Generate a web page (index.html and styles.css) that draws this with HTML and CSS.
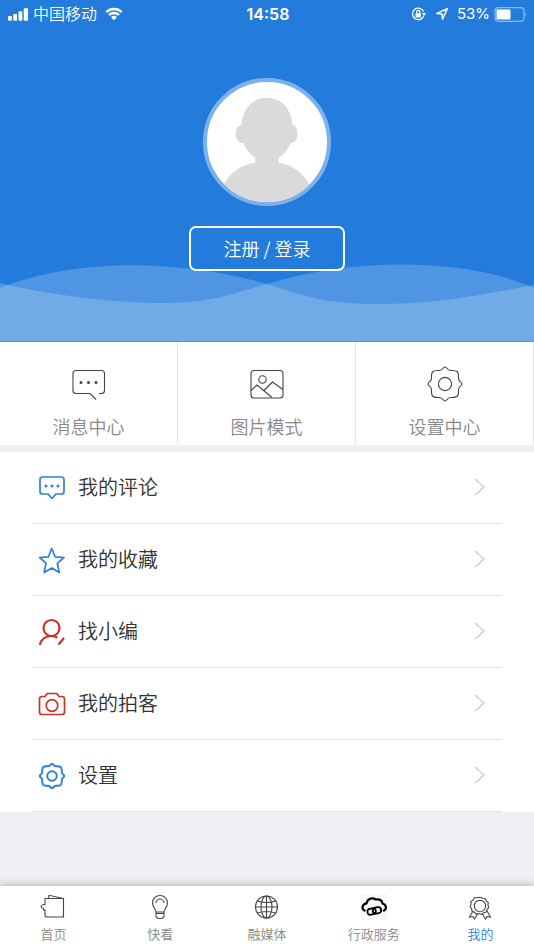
FILE: index.html
```html
<!DOCTYPE html>
<html lang="zh-CN">
<head>
<meta charset="utf-8">
<meta name="viewport" content="width=device-width, initial-scale=1">
<title>我的</title>
<link rel="stylesheet" href="styles.css">
</head>
<body>
<svg class="defs" aria-hidden="true">
  <symbol id="gear" viewBox="0 0 36 36">
    <g id="gear-edge">
      <path id="gear-quarter" d="M18 1C20 1 19.8 4.2 23.6 4.5C26.8 4.5 29 4.2 30.2 5.8C31.8 7 31.500 9.2 31.500 12.4C31.8 16.2 35 16 35 18"/>
      <use href="#gear-quarter" transform="rotate(90 18 18)"/>
      <use href="#gear-quarter" transform="rotate(180 18 18)"/>
      <use href="#gear-quarter" transform="rotate(270 18 18)"/>
    </g>
    <circle cx="18" cy="18" r="6.600"/>
  </symbol>
  <symbol id="chevron" viewBox="0 0 12 20"><path d="M1 2l9 8-9 8"/></symbol>
</svg>
<div class="app">
  <header class="hero">
    <div class="status">
      <div class="status-side">
        <svg class="signal" viewBox="0 0 22 14"><rect x="0" y="9" width="4" height="5" rx="1"/><rect x="5.500" y="7" width="4" height="7" rx="1"/><rect x="11" y="4" width="4" height="10" rx="1"/><rect x="16.500" y="1" width="4.500" height="13" rx="1"/></svg>
        <span class="carrier">中国移动</span>
        <svg class="wifi" viewBox="0 0 18 14"><path d="M1.300 5.200a11 11 0 0 1 15.400 0M4 8a7.200 7.200 0 0 1 10 0"/><path class="solid" d="M9 13.300L6 10.300a4.300 4.300 0 0 1 6 0z"/></svg>
      </div>
      <span class="time">14:58</span>
      <div class="status-side status-end">
        <svg class="lock" viewBox="0 0 16 14"><path d="M12.600 9.300A5.800 5.800 0 1 1 12.600 4.500"/><path class="solid" d="M10.800 6h4.400L13 9zM4.500 6.300h5.400v4.200H4.500z"/><path d="M5.600 6.500V5a1.600 1.600 0 0 1 3.200 0v1.500"/></svg>
        <svg class="arrow" viewBox="0 0 14 14"><path d="M12.300 1.700L1.800 6.400l5.200.6.500 5.300z"/></svg>
        <span class="percent">53%</span>
        <svg class="battery" viewBox="0 0 34 15"><rect class="shell" x="1" y=".7" width="29" height="13.600" rx="3.500"/><rect class="level" x="2.500" y="2.500" width="14" height="10" rx="1"/><path class="tip" d="M31.500 5.300q2 2.200 0 4.400z"/></svg>
      </div>
    </div>
    <div class="avatar">
      <svg viewBox="0 0 122 122"><path d="M61 16c-15 0-25 12-26 28-4 0-6 5-6 9 0 5 4 10 8 9 3 7 7 12 12 15v5C34 84 22 93 16 106a63 63 0 0 0 45 18 63 63 0 0 0 44-18C99 93 87 84 73 82v-5c5-3 9-8 12-15 4 1 7-4 7-9 0-4-1-9-5-9C86 28 76 16 61 16z"/></svg>
    </div>
    <a class="login" href="#">注册 / 登录</a>
    <svg class="waves" viewBox="0 0 534 80" preserveAspectRatio="none" aria-hidden="true">
      <path d="M0 26C70 -2 170 -5 267 22C305 34 320 42 385 42C440 41 480 33 534 23V80H0z"/>
      <path d="M0 21C50 33 110 41 165 41C220 40 235 30 267 22C350 -4 465 -5 534 26V79H0z"/>
    </svg>
  </header>
  <main>
    <nav class="quick" aria-label="快捷入口">
      <a class="quick-item" href="#">
        <svg class="quick-icon" viewBox="0 0 36 36"><path d="M28 27.500h2.500q3 0 3-3V7.500q0-3-3-3H5q-3 0-3 3v17q0 3 3 3h14l6 6"/><path class="dots" d="M10 16.500h.01M17.500 16.500h.01M25 16.500h.01"/></svg>
        <span>消息中心</span>
      </a>
      <a class="quick-item" href="#">
        <svg class="quick-icon" viewBox="0 0 36 36"><rect x="2" y="4.500" width="32" height="27.500" rx="3"/><circle cx="13.500" cy="13.500" r="3.700"/><path d="M2 24.500L8 19l15 12.500M14.500 25l9-9L34 23.500"/></svg>
        <span>图片模式</span>
      </a>
      <a class="quick-item" href="#">
        <svg class="quick-icon"><use href="#gear"/></svg>
        <span>设置中心</span>
      </a>
    </nav>
    <ul class="menu">
      <li><a class="row" href="#">
        <svg class="row-icon blue" viewBox="0 0 28 28"><path d="M4.500 3h19q2.500 0 2.500 2.500v12q0 2.500-2.500 2.500H18l-4 4.500-4-4.500H4.500Q2 20 2 17.500v-12Q2 3 4.500 3z"/><path class="dots" d="M8 12h.01M14 12h.01M20 12h.01"/></svg>
        <span>我的评论</span><svg class="chevron"><use href="#chevron"/></svg></a></li>
      <li><a class="row" href="#">
        <svg class="row-icon blue" viewBox="0 0 28 28"><path d="M13.700 2.500l3.500 8.300 8.800.7-6.700 5.800 2 9.200-7.600-4.500-7.600 4.500 2-9.200L1.600 11.500l8.800-.7z"/></svg>
        <span>我的收藏</span><svg class="chevron"><use href="#chevron"/></svg></a></li>
      <li><a class="row" href="#">
        <svg class="row-icon red thick" viewBox="0 0 28 28"><circle cx="13.500" cy="10" r="8"/><path d="M1.800 27C3.300 21 7.500 18 13.500 18c2.500 0 4.500.7 6 1.700M26 20l-5.500 6.500"/></svg>
        <span>找小编</span><svg class="chevron"><use href="#chevron"/></svg></a></li>
      <li><a class="row" href="#">
        <svg class="row-icon red" viewBox="0 0 28 28"><path d="M4 6.500h3l2.300-3h9.400l2.300 3h3q2.500 0 2.500 2.500v13q0 2.500-2.500 2.500H4Q1.500 24.500 1.500 22V9Q1.500 6.500 4 6.500z"/><circle cx="14" cy="15.500" r="5.800"/></svg>
        <span>我的拍客</span><svg class="chevron"><use href="#chevron"/></svg></a></li>
      <li><a class="row" href="#">
        <svg class="row-icon blue gear"><use href="#gear"/></svg>
        <span>设置</span><svg class="chevron"><use href="#chevron"/></svg></a></li>
    </ul>
  </main>
  <nav class="tabs" aria-label="主导航">
    <a class="tab" href="#"><svg class="tab-icon" viewBox="0 0 26 26"><path d="M5 4.500h18.500v18.500H7q-2 0-2-2v-5H3.500v-1.500q-2.500-.5-2.500-2t2.500-2H5zM8.500 4.500L9 1.300l13.500 3"/></svg><span>首页</span></a>
    <a class="tab" href="#"><svg class="tab-icon" viewBox="0 0 26 26"><path d="M9 18c0-3-3.500-4.500-3.500-9a7.500 7.500 0 0 1 15 0c0 4.500-3.500 6-3.500 9zM9 18v3.500q0 3 4 3t4-3V18M9 19.500h8M9 9a4 4 0 0 1 8 0"/></svg><span>快看</span></a>
    <a class="tab" href="#"><svg class="tab-icon" viewBox="0 0 26 26"><circle cx="12.500" cy="13" r="11"/><ellipse cx="12.500" cy="13" rx="5.500" ry="11"/><path d="M12.500 2v22M1.500 13h22M3.500 7q9 3 18 0M3.500 19q9-3 18 0"/></svg><span>融媒体</span></a>
    <a class="tab" href="#"><svg class="tab-icon cloud" viewBox="0 0 26 26"><path d="M3.500 16.500C0 14.500 1.500 10 5.500 9.300 6.500 4.500 11 3 15 5.500c4-.5 6 .8 6.500 4 4 1.200 4.500 5.500 1.500 7"/><g class="links" transform="rotate(-12 13 17)"><rect x="6.300" y="14" width="8.500" height="6" rx="3"/><rect x="11.800" y="14" width="8.500" height="6" rx="3"/></g></svg><span>行政服务</span></a>
    <a class="tab active" href="#" aria-current="page"><svg class="tab-icon" viewBox="0 0 26 26"><circle cx="12" cy="12" r="5.700"/><path d="M12 3.300l2.500 1 2.600.2 1.200 2.300 2 1.700-.3 2.600.7 2.500-1.700 2-.8 2.500-2.600.7-2.100 1.600-2.500-.8-2.600.5-1.900-1.800-2.500-1-.4-2.600-1.500-2.100.9-2.500-.2-2.600 2.200-1.400 1.300-2.300 2.600-.1zM5 17l-3.500 6 3.500-.5 1.500 2.500 3-5M19 17l3.500 6-3.500-.5-1.500 2.500-3-5"/></svg><span>我的</span></a>
  </nav>
</div>
</body>
</html>
```
FILE: styles.css
```css
* { box-sizing: border-box; }
body {
  margin: 0;
  background: #eff0f5;
  color: #333;
  font-family: "Noto Sans CJK SC", sans-serif;
  font-weight: 350;
}
a { color: inherit; text-decoration: none; }
svg { display: block; flex: none; fill: none; stroke: currentColor; }
.defs { position: absolute; width: 0; height: 0; }
.app { display: flex; flex-direction: column; min-height: 100vh; }
main { flex: 1; }

.hero {
  position: relative;
  display: flex;
  flex-direction: column;
  align-items: center;
  padding-bottom: 71px;
  background: #237bdc;
  color: #fff;
}
.status {
  display: grid;
  grid-template-columns: 1fr auto 1fr;
  align-items: center;
  align-self: stretch;
  height: 28px;
  padding: 0 6px 0 8px;
  font-family: Inter, "Noto Sans CJK SC", sans-serif;
  font-size: 16px;
  line-height: 24px;
}
.status-side { display: flex; align-items: center; gap: 4px; }
.status-end { justify-content: flex-end; }
.time { font-weight: 600; }
.percent { font-size: 15px; font-weight: 400; }
.signal { width: 21px; height: 14px; fill: #fff; stroke: none; }
.wifi { width: 18px; height: 14px; margin-left: 4px; stroke-width: 2.4; }
.solid { fill: #fff; stroke: none; }
.lock { width: 16px; height: 14px; stroke-width: 1.3; }
.arrow { width: 14px; height: 14px; margin: 0 4px; stroke-width: 1.5; stroke-linejoin: round; }
.battery { width: 34px; height: 15px; }
.shell { stroke: #91bdee; stroke-width: 1.2; }
.level { fill: #fff; stroke: none; }
.tip { fill: #91bdee; stroke: none; }
.avatar {
  width: 128px;
  height: 128px;
  margin-top: 50px;
  overflow: hidden;
  border: 4px solid #7db1ec;
  border-radius: 50%;
  background: #fff;
}
.avatar svg { width: 100%; height: 100%; fill: #dadada; stroke: none; }
.login {
  position: relative;
  z-index: 1;
  margin-top: 20px;
  padding: 8px 32px;
  border: 2px solid #fff;
  border-radius: 7px;
  font-size: 18px;
  line-height: 25px;
}
.waves { position: absolute; left: 0; bottom: 0; width: 100%; height: 80px; fill: #fff; fill-opacity: .2; stroke: none; }

.quick { display: grid; grid-template-columns: repeat(3, 1fr); background: #fff; }
.quick-item {
  display: flex;
  flex-direction: column;
  align-items: center;
  gap: 12px;
  padding: 24px 0 7px;
  border-right: 1px solid #e5e5e8;
  color: #888;
  font-size: 18px;
  line-height: 24px;
}
.quick-icon { width: 36px; height: 36px; color: #444; stroke-width: 1.1; }
.dots { stroke-width: 3; stroke-linecap: round; }

.menu { margin: 7px 0 0; padding: 0 32px; background: #fff; list-style: none; }
.row {
  display: flex;
  align-items: center;
  gap: 12px;
  height: 72px;
  padding: 0 16px 0 6px;
  border-bottom: 1px solid #e4e4e6;
  font-size: 20px;
  line-height: 28px;
}
.row span { flex: 1; padding-bottom: 2px; }
.row-icon { width: 28px; height: 28px; stroke-width: 1.7; stroke-linejoin: round; }
.row-icon.gear { padding: 1px; stroke-width: 2.7; }
.row-icon.thick { stroke-width: 2.2; }
.blue { color: #2b80df; }
.red { color: #cb3328; }
.chevron { width: 12px; height: 20px; margin-bottom: 2px; color: #c8c8cc; stroke-width: 1.2; }

.tabs {
  display: grid;
  grid-template-columns: repeat(5, 1fr);
  background: #fff;
  box-shadow: 0 -1px 8px rgb(0 0 0 / 25%);
}
.tab {
  display: flex;
  flex-direction: column;
  align-items: center;
  gap: 4px;
  padding: 8px 0 6px;
  color: #888;
  font-size: 13px;
  line-height: 20px;
}
.tab-icon { width: 26px; height: 26px; color: #444; stroke-width: 1.1; }
.tab-icon.cloud { color: #000; background: #f8f8f8; stroke-width: 2.2; stroke-linecap: round; }
.links { stroke-width: 1.8; }
.tab.active { color: #2b80df; }
```
